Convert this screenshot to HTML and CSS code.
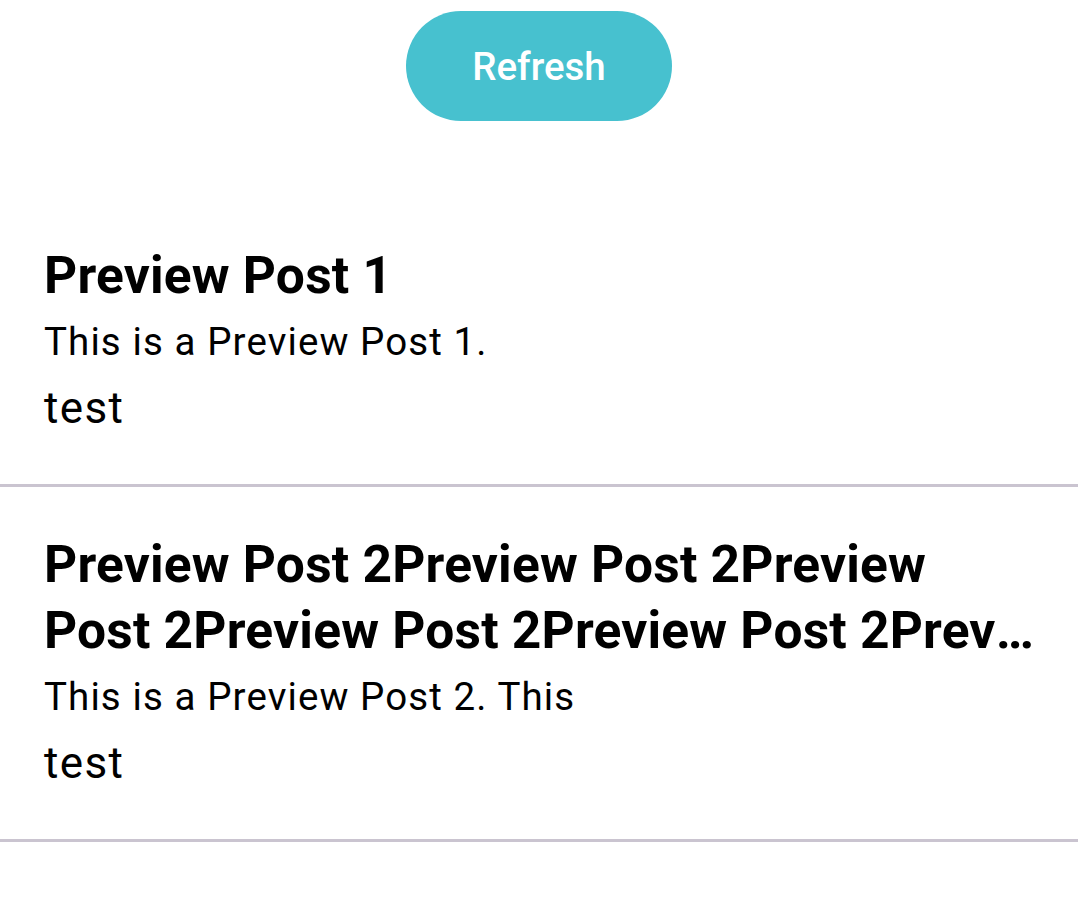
FILE: index.html
```html
<!DOCTYPE html>
<html lang="en">
<head>
<meta charset="utf-8">
<title>Posts</title>
<link rel="stylesheet" href="styles.css">
</head>
<body>
<main class="screen">
  <div class="toolbar">
    <button class="refresh" type="button">Refresh</button>
  </div>
  <ul class="posts">
    <li class="post">
      <h2 class="post-title">Preview Post 1</h2>
      <p class="post-body">This is a Preview Post 1.</p>
      <p class="post-tag">test</p>
    </li>
    <li class="post">
      <h2 class="post-title">
        <span class="title-line">Preview Post 2Preview Post 2Preview</span>
        <span class="title-line clamp">Post 2Preview Post 2Preview Post 2Preview Post 2Preview Post 2</span>
      </h2>
      <p class="post-body">This is a Preview Post 2. This</p>
      <p class="post-tag">test</p>
    </li>
  </ul>
</main>
</body>
</html>
```

FILE: styles.css
```css
* { box-sizing: border-box; }

html, body {
  margin: 0;
  padding: 0;
  background: #ffffff;
}

body {
  font-family: Roboto, "Noto Sans", "Liberation Sans", sans-serif;
  color: #000000;
}

.screen {
  width: 1078px;
  min-height: 908px;
}

.toolbar {
  display: flex;
  justify-content: center;
  padding-top: 11px;
}

.refresh {
  width: 266px;
  height: 110px;
  border: none;
  border-radius: 55px;
  background: #47c1cf;
  color: #ffffff;
  font-family: Roboto, "Noto Sans", sans-serif;
  font-weight: 500;
  font-size: 38.5px;
  letter-spacing: 0;
  padding: 0;
  cursor: pointer;
}

.posts {
  list-style: none;
  margin: 77px 0 0;
  padding: 0;
}

.post {
  padding: 45px 44px 43px;
  border-bottom: 3px solid #cac4d0;
}

.post-title {
  margin: 0;
  font-size: 51.5px;
  font-weight: 700;
  line-height: 66px;
  letter-spacing: 0.2px;
}

.title-line {
  display: block;
}

.title-line.clamp {
  white-space: nowrap;
  overflow: hidden;
  text-overflow: ellipsis;
}

.post-body {
  margin: 0;
  font-size: 38.5px;
  line-height: 66px;
  letter-spacing: 1.1px;
}

.post-tag {
  margin: 0;
  font-size: 44px;
  line-height: 66px;
  letter-spacing: 1.375px;
}
```
